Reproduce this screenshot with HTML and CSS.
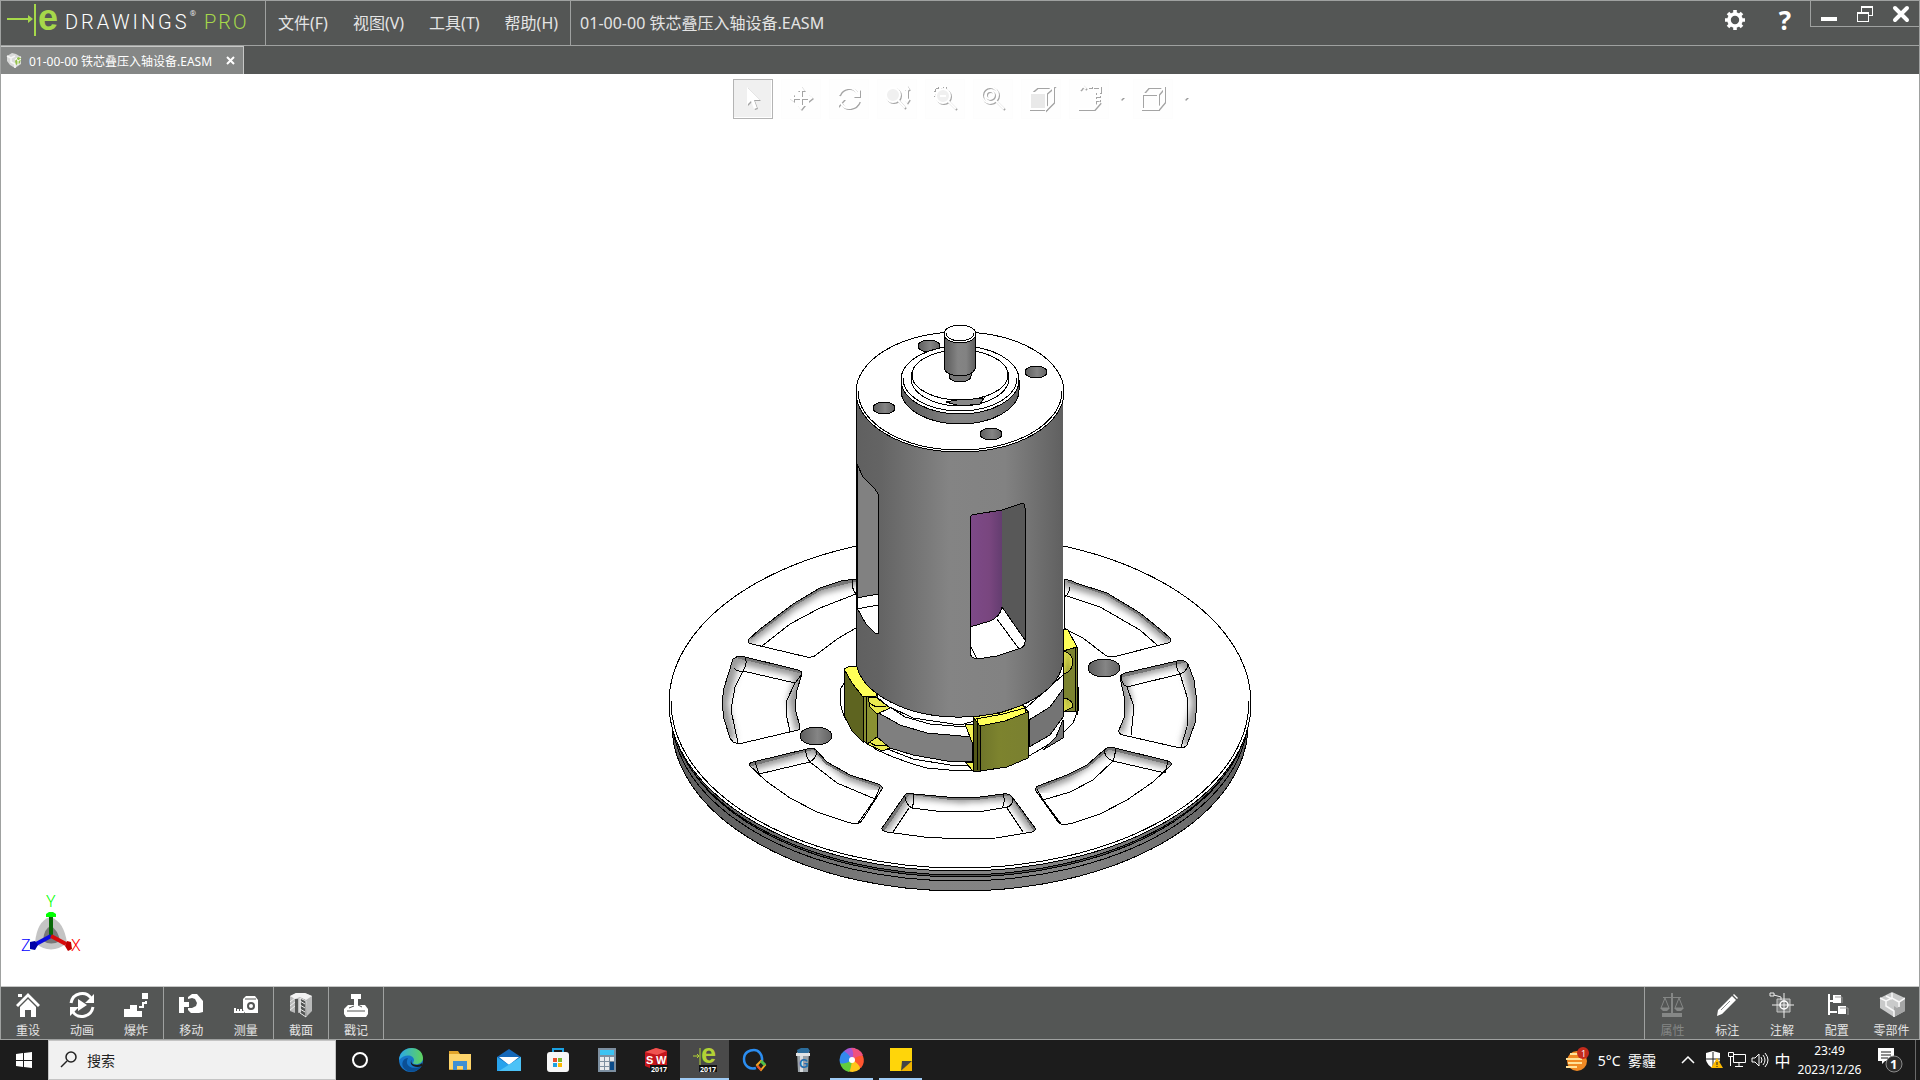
FILE: index.html
```html
<!DOCTYPE html>
<html lang="zh-CN">
<head>
<meta charset="UTF-8">
<meta name="viewport" content="width=device-width, initial-scale=1.0">
<title>eDrawings Pro</title>
<link rel="stylesheet" href="styles.css">
</head>
<body>

<div class="app">
    <header class="header">
        <div class="logo">
            <svg class="logo-mark" width="31" height="34" viewBox="0 0 31 34">
                <path d="M1 15h21v-3l5 4-5 4v-3H1z" fill="#a6d84a"/>
                <path d="M29 1v32" stroke="#a6d84a" stroke-width="2"/>
            </svg>
            <span class="logo-e">e</span>
            <span class="logo-name">DRAWINGS</span>
            <span class="logo-reg">®</span>
            <span class="logo-pro">PRO</span>
        </div>
        <nav class="menu">
            <button type="button">文件(F)</button>
            <button type="button">视图(V)</button>
            <button type="button">工具(T)</button>
            <button type="button">帮助(H)</button>
        </nav>
        <div class="doc-title">01-00-00 铁芯叠压入轴设备.EASM</div>
        <button type="button" class="head-btn" aria-label="选项">
            <svg width="22" height="22" viewBox="-11 -11 22 22">
                <circle r="6" fill="none" stroke="#fff" stroke-width="3.6"/>
                <path d="M0-10v3M0 10V7M-10 0h3M10 0H7M-7-7l2 2M7 7L5 5M7-7L5-5M-7 7l2-2" stroke="#fff" stroke-width="3.6"/>
            </svg>
        </button>
        <button type="button" class="head-btn help" aria-label="帮助">?</button>
        <div class="win-buttons">
            <button type="button" aria-label="最小化"><svg width="18" height="18"><path d="M1 14h16" stroke="#fff" stroke-width="4"/></svg></button>
            <button type="button" aria-label="还原"><svg width="18" height="18" fill="none" stroke="#fff" shape-rendering="crispEdges"><path d="M5.500 7V1.500h11v9H13M1.500 8h11v8.500h-11z"/><path d="M5 2h12M1 8h12" stroke-width="2"/></svg></button>
            <button type="button" aria-label="关闭"><svg width="18" height="18"><path d="M3 3l12 12M15 3L3 15" stroke="#fff" stroke-width="4" stroke-linecap="round"/></svg></button>
        </div>
    </header>

    <div class="tabs">
        <div class="tab">
            <svg width="17" height="17" viewBox="0 0 17 17">
                <path d="M1 4l5-3 4 1 5 3v7l-6 4-5-3-3-4z" fill="#d9dad9"/>
                <path d="M1 4l4 2v4l4 2v4M9 8l6-3M5 6l4-2" fill="none" stroke="#f6f6f6" stroke-width="1.500"/>
                <path d="M9 9l3-4 3 1-1 5-4 2z" fill="#94c14a"/>
                <path d="M10 6l2 3 3-2M12 9v4" fill="none" stroke="#fff"/>
            </svg>
            <span>01-00-00 铁芯叠压入轴设备.EASM</span>
            <button type="button" aria-label="关闭"><svg width="9" height="9"><path d="M1 1l7 7M8 1L1 8" stroke="#fff" stroke-width="2"/></svg></button>
        </div>
    </div>

    <main class="viewport">
        <div class="toolbar">
            <button type="button" class="tool selected" aria-label="选择"><svg viewBox="0 0 24 24"><path d="M6 1v18l4-4 3 8 3-1-3-8h6z" class="solid"/></svg></button>
            <button type="button" class="tool" aria-label="平移"><svg viewBox="0 0 24 24"><path d="M12 4v16M4 12h16" /><path d="M12 0l4 5H8zM12 24l4-5H8zM0 12l5-4v8zM24 12l-5-4v8z" class="solid"/></svg></button>
            <button type="button" class="tool" aria-label="旋转"><svg viewBox="0 0 24 24"><path d="M2 9c3-8 14-10 18-2M22 15c-3 8-14 10-18 2"/><path d="M23 3v8h-7zM1 21v-8h7z" class="solid"/></svg></button>
            <button type="button" class="tool" aria-label="缩放"><svg viewBox="0 0 24 24"><circle cx="8" cy="9" r="7" class="lens"/><path d="M13 14l7 8M22 2v13M20 4l2-3 2 3M20 13l2 3 2-3"/></svg></button>
            <button type="button" class="tool" aria-label="局部放大"><svg viewBox="0 0 24 24"><path d="M1 10V1h12" stroke-dasharray="3 2"/><circle cx="10" cy="10" r="7" class="lens"/><path d="M15 15l8 8M7 10h6"/></svg></button>
            <button type="button" class="tool" aria-label="整屏显示"><svg viewBox="0 0 24 24"><circle cx="9" cy="9" r="8"/><circle cx="9" cy="9" r="4"/><path d="M15 15l8 8"/></svg></button>
            <button type="button" class="tool" aria-label="上色"><svg viewBox="0 0 24 24"><path d="M1 7h16v16H1z" fill="#e9e9e9"/><path d="M1 7l7-6h16l-7 6v16l7-7V1"/></svg></button>
            <button type="button" class="tool" aria-label="视图方向"><svg viewBox="0 0 24 24"><path d="M3 4l3-4 3 3M11 1h4M16 1h7v6M18 6v4h5M18 14h5M1 23h16l6-7M18 11v9"/></svg></button>
            <button type="button" class="tool-arrow" aria-label="更多"><svg viewBox="0 0 8 6"><path d="M2 1h5L4 4z"/></svg></button>
            <button type="button" class="tool" aria-label="显示样式"><svg viewBox="0 0 24 24"><path d="M1 8h16v15H1zM1 8l6-7h16v15l-6 7M17 8l6-7"/></svg></button>
            <button type="button" class="tool-arrow" aria-label="更多"><svg viewBox="0 0 8 6"><path d="M2 1h5L4 4z"/></svg></button>
        </div>

        <svg class="model" viewBox="1 74 1918 912">
            <defs>
                <linearGradient id="steel">
                    <stop offset="0" stop-color="#606060"/><stop offset=".12" stop-color="#646464"/>
                    <stop offset=".45" stop-color="#848484"/><stop offset=".72" stop-color="#828282"/>
                    <stop offset="1" stop-color="#606060"/>
                </linearGradient>
                <linearGradient id="hole">
                    <stop offset="0" stop-color="#5c5c5c"/><stop offset=".55" stop-color="#858585"/><stop offset="1" stop-color="#626262"/>
                </linearGradient>
                <linearGradient id="violet">
                    <stop offset="0" stop-color="#7d4a88"/><stop offset=".6" stop-color="#79467f"/><stop offset="1" stop-color="#643d70"/>
                </linearGradient>
                <linearGradient id="olive">
                    <stop offset="0" stop-color="#6f752a"/><stop offset=".4" stop-color="#7d832e"/><stop offset="1" stop-color="#7a8030"/>
                </linearGradient>
                <radialGradient id="boss">
                    <stop offset="0" stop-color="#8a9130"/><stop offset="1" stop-color="#d8d84c"/>
                </radialGradient>
                <filter id="soft" x="-10%" y="-10%" width="120%" height="120%"><feGaussianBlur stdDeviation="3"/></filter>

                <path id="p1" d="M856 579L841 581 820 588 793 604 759 630 748 640Q748 644 752 644L807 657Q813 658 816 655L837 639 856 628V594z"/>
                <path id="p2" d="M1064 580Q1070 579 1076 583L1107 593 1140 613 1161 630 1170 638Q1172 642 1168 643L1113 657Q1108 657 1105 655L1083 638 1067 630 1064 628z"/>
                <path id="p3" d="M733 659Q738 655 745 657L798 670Q802 671 802 674L797 690 795 708 800 727Q800 730 798 730L743 743Q737 744 733 742L730 738 724 719 722 703 724 688z"/>
                <path id="p4" d="M1120 678Q1120 675 1125 673L1177 661Q1184 659 1188 664L1194 680 1197 703 1195 723 1187 745Q1185 748 1180 748L1123 735Q1118 734 1119 730L1124 718 1125 700z"/>
                <path id="p5" d="M750 766Q748 763 753 762L807 749Q814 747 817 751L827 762 850 775 878 784Q883 786 882 789L863 819Q860 824 855 824L847 822 817 812 790 798 766 781z"/>
                <path id="p6" d="M1171 765Q1173 763 1168 761L1115 748Q1108 746 1104 750L1087 765 1067 775 1038 786Q1035 787 1036 791L1056 819Q1059 824 1064 825L1073 823 1100 814 1127 800 1153 782z"/>
                <path id="p7" d="M905 795Q907 792 914 794L947 797 980 797 1003 794Q1010 793 1013 798L1035 828Q1036 831 1032 832L996 838 960 839 924 837 887 832Q881 831 882 828z"/>
                <clipPath id="c1"><use href="#p1"/></clipPath><clipPath id="c2"><use href="#p2"/></clipPath>
                <clipPath id="c3"><use href="#p3"/></clipPath><clipPath id="c4"><use href="#p4"/></clipPath>
                <clipPath id="c5"><use href="#p5"/></clipPath><clipPath id="c6"><use href="#p6"/></clipPath>
                <clipPath id="c7"><use href="#p7"/></clipPath>
            </defs>

            <!-- flange rim -->
            <g class="edge">
                <ellipse cx="960" cy="725" rx="288" ry="166" fill="url(#steel)"/>
                <ellipse cx="960" cy="716" rx="288" ry="165" fill="url(#steel)"/>
                <ellipse cx="960" cy="711" rx="287" ry="166" fill="#555"/>
                <ellipse cx="960" cy="708" rx="289" ry="167" fill="url(#steel)"/>
                <ellipse cx="960" cy="703" rx="291" ry="168" fill="#fff"/>
                <path d="M671 701A289 167 0 0 0 1249 701" fill="none"/>
            </g>

            <!-- pockets -->
            <g class="shade">
                <g clip-path="url(#c1)"><path d="M745 641L793 604 820 588 860 578" class="blur"/><path d="M750 637L793 604 820 588 856 579" class="wall"/></g>
                <g clip-path="url(#c2)"><path d="M1060 579L1107 593 1140 613 1172 640" class="blur"/><path d="M1068 580L1107 593 1140 613 1170 638" class="wall"/></g>
                <g clip-path="url(#c3)"><path d="M730 740L722 703 735 657 802 672 794 700 801 730" class="blur"/><path d="M738 656L802 671" class="wall"/></g>
                <g clip-path="url(#c4)"><path d="M1118 732L1126 700 1120 675 1187 659 1198 703 1187 745" class="blur"/><path d="M1121 675L1185 660" class="wall"/></g>
                <g clip-path="url(#c5)"><path d="M750 765L814 747 850 775 884 786" class="blur"/><path d="M750 764L814 747 827 762 850 775 884 786" class="wall"/></g>
                <g clip-path="url(#c6)"><path d="M1172 763L1108 747 1067 775 1034 788" class="blur"/><path d="M1172 763L1108 747 1087 765 1067 775 1034 788" class="wall"/></g>
                <g clip-path="url(#c7)"><path d="M882 830L908 792 960 797 1010 794 1036 830" class="blur"/><path d="M882 830L908 792 947 797 980 797 1011 793 1036 830" class="wall"/></g>
            </g>
            <g class="edge" fill="none">
                <use href="#p1"/><use href="#p2"/><use href="#p3"/><use href="#p4"/><use href="#p5"/><use href="#p6"/><use href="#p7"/>
                <path d="M856 594L820 608 790 624 762 646M852 580Q852 590 856 594"/>
                <path d="M1064 595L1100 607 1140 630 1157 645M1070 581Q1071 594 1064 597"/>
                <path d="M734 668Q737 672 743 671L795 683 802 674M743 671Q748 664 745 657M743 671L735 687 731 710 738 743M795 683L787 700 786 713 790 732"/>
                <path d="M1122 676Q1120 683 1127 687L1180 674Q1187 672 1188 664M1180 674Q1175 667 1177 661M1180 674L1188 700 1187 727 1181 747M1127 687L1134 707 1131 735"/>
                <path d="M755 762L759 774 810 762Q818 757 816 750M810 762Q805 756 806 749M810 762L837 783 875 799 880 787M875 799L858 823M750 766L759 774"/>
                <path d="M1168 761L1165 773 1113 761Q1103 757 1105 749M1113 761Q1116 755 1115 748M1113 761L1093 780 1070 792 1043 800 1037 789M1043 800L1061 824"/>
                <path d="M905 797Q906 805 912 808L936 811 984 811 1002 808Q1013 808 1013 798M912 808Q915 800 913 794M1002 808Q1006 802 1003 794M909 808L893 832M1007 808L1023 832"/>
            </g>
            <g class="edge" fill="url(#hole)">
                <ellipse cx="816" cy="736" rx="16" ry="9"/>
                <ellipse cx="1104" cy="668" rx="16" ry="9"/>
            </g>

            <!-- bore and laminated core -->
            <g class="edge">
                <path d="M841 688Q838 704 845 718 856 737 877 750 900 761 927 768L960 771 1000 768 1029 756 1056 740 1073 723Q1081 706 1078 687L1064 660H860z" fill="#fff"/>
                <path d="M1043 750L1056 737 1063 720V738z" fill="#777"/>
                <path d="M877 712L890 707 913 718 960 725 1027 707 1063 675V689L1050 707 1029 720 972 737 927 733 900 725z" fill="#fff"/>
                <path d="M890 707L905 717 930 724 966 727M877 745L913 759 950 765 974 765" fill="none"/>
                <path d="M877 712L900 725 927 733 972 737V762L947 761 913 755 890 748 877 741z" fill="#7f7f7f"/>
                <path d="M1029 720L1050 707 1063 689V717L1050 735 1029 747z" fill="#747474"/>
            </g>

            <!-- left clamp -->
            <g class="edge">
                <path d="M863 697L877 693 878 698 890 708 877 713V737L890 748 882 751 863 741z" fill="#8a9132"/>
                <path d="M868 697L877 698 890 708 877 714 870 707zM867 744L877 737 890 748 882 751z" fill="#eaea50"/>
                <path d="M870 703Q876 709 886 706M870 742Q876 748 886 745" fill="none"/>
                <path d="M844 669L863 697V742L852 731 844 715z" fill="#5e6420"/>
                <path d="M844 669L848 667 857 666 860 673 868 685 877 693 876 696 863 697 852 683z" fill="#ffff58"/>
                <path d="M863 697V742M866 697V744" fill="none"/>
            </g>

            <!-- right clamp -->
            <g class="edge">
                <path d="M1063 629L1068 630 1077 647V711L1063 712z" fill="#7c8330"/>
                <path d="M1063 651Q1073 653 1073 663 1071 673 1063 674zM1063 698Q1073 699 1073 707L1063 712z" fill="url(#boss)"/>
                <path d="M1063 629L1068 630 1077 647 1063 651z" fill="#ffff58"/>
                <path d="M1075 648V712M1077 688Q1081 702 1077 715" fill="none"/>
            </g>

            <!-- sleeve -->
            <path d="M856 391V663A104 60 0 0 0 1063 663V391z" fill="url(#steel)" class="noline"/>
            <path d="M856 391V663A104 60 0 0 0 1063 663" fill="none" class="edge"/>
            <g class="edge">
                <path d="M857 464L863 477 875 489 878 494V633H875L866 624 857 608z" fill="#fff"/>
                <path d="M857 464L863 477 875 489 878 494V594L857 598z" fill="#818181"/>
                <path d="M857 609L878 605" fill="none"/>
            </g>
            <g class="edge">
                <path d="M970 518Q970 514 977 514L1002 510 1020 504Q1025 502 1025 508V642Q1025 646 1021 648L997 656 977 659Q970 658 970 652z" fill="#fff"/>
                <path d="M1002 510L1020 504Q1025 502 1025 508V640L1002 607z" fill="#585858" class="noline"/>
                <path d="M970 518Q970 514 977 514L1002 510V607Q1000 617 990 621L970 627z" fill="url(#violet)" class="noline"/>
                <path d="M970 627L990 621Q1000 617 1002 607L1025 640M997 619L1019 649M971 647L977 659" fill="none"/>
                <path d="M970 652V518Q970 514 977 514L1002 510 1020 504Q1025 502 1025 508V642" fill="none"/>
            </g>

            <!-- front clamp -->
            <g class="edge">
                <path d="M965 724H973V745zM965 762H973V771z" fill="#f0f052"/>
                <path d="M973 717L980 726V771H973z" fill="#535818"/>
                <path d="M980 726L1028 712V758L1007 767 980 771z" fill="url(#olive)"/>
                <path d="M973 717L1000 713 1023 705 1028 712 1005 721 980 726z" fill="#ffff58"/>
                <path d="M977 719V770M976 719L1003 714 1025 708M1025 706V712" fill="none"/>
            </g>

            <!-- top face -->
            <g class="edge">
                <ellipse cx="960" cy="392" rx="104" ry="60" fill="#fff"/>
                <path d="M858 391A102 59 0 0 0 1062 391" fill="none"/>
                <g fill="url(#hole)">
                    <ellipse cx="929" cy="346" rx="11" ry="6"/>
                    <ellipse cx="1036" cy="372" rx="11" ry="6"/>
                    <ellipse cx="884" cy="408" rx="11" ry="6"/>
                    <ellipse cx="991" cy="434" rx="11" ry="6"/>
                </g>
                <path d="M901 380V390A59 34 0 0 0 1019 390V380z" fill="url(#steel)"/>
                <ellipse cx="960" cy="380" rx="59" ry="34" fill="#fff"/>
                <path d="M903 378A57 33 0 0 0 1017 378" fill="none"/>
                <ellipse cx="960" cy="378" rx="49" ry="28" fill="#fff"/>
                <path d="M946 402L962 399 984 398 980 404 960 406z" fill="#888"/>
                <ellipse cx="960" cy="375" rx="48" ry="25" fill="#fff"/>
                <path d="M949 372V376A11 6 0 0 0 971 376V372z" fill="#777"/>
                <path d="M944 334V369Q948 376 960 376T975 369V334z" fill="url(#steel)"/>
                <ellipse cx="960" cy="334" rx="16" ry="9" fill="#fff"/>
                <path d="M946 333A14 8 0 0 0 974 333" fill="none"/>
            </g>
        </svg>

        <svg class="triad" width="64" height="64" viewBox="20 890 64 64">
            <path d="M35 943Q37 921 50 917 64 921 67 943 51 956 35 943z" fill="#c4c4c4"/>
            <path d="M43 941Q44 928 51 926 58 930 60 941 51 946 43 941z" fill="#787878"/>
            <path d="M51 936V916" stroke="#086808" stroke-width="4"/>
            <path d="M51 936L36 944" stroke="#0a0ae0" stroke-width="4"/>
            <path d="M51 936L66 944" stroke="#d80a0a" stroke-width="4"/>
            <path d="M46 914l3-2h4l3 2v3H46z" fill="#00ff00"/>
            <path d="M30 942l5-1 3 4-3 5-5-1z" fill="#0000a8"/>
            <path d="M71 942l-4-1-2 5 3 5 4-2z" fill="#c00000"/>
            <text x="46" y="907" fill="#00ff00">Y</text>
            <text x="21" y="951" fill="#0000ff">Z</text>
            <text x="71" y="951" fill="#ff0000">X</text>
        </svg>
    </main>

    <footer class="commands">
        <div class="group">
            <button type="button"><svg viewBox="0 0 26 26"><path d="M3 5h4V2H3zM13 1L1 13l2 2L13 5l10 10 2-2z" fill="#fff"/><path d="M5 15l8-8 8 8v10h-5v-7h-6v7H5z" fill="#fff"/></svg>重设</button>
            <button type="button"><svg viewBox="0 0 26 26"><path d="M2 11C4 0 17-1 22 6M24 15c-2 11-15 12-20 5" fill="none" stroke="#fff" stroke-width="3"/><path d="M25 2v9h-9zM1 24v-9h9zM9 7l9 6-9 6z" fill="#fff"/></svg>动画</button>
            <button type="button"><svg viewBox="0 0 26 26"><path d="M1 25v-8h6v-4h7v6h5v6zM19 1h6v6h-6z" fill="#fff"/><path d="M16 15h4v-4h3V9" fill="none" stroke="#fff" stroke-width="2"/></svg>爆炸</button>
        </div>
        <div class="group pair">
            <button type="button"><svg viewBox="0 0 26 26"><path d="M1 5h5v5h5v5H6v6H1z" fill="#fff"/><path d="M10 5l4-3h5l6 7v11l-4 1h-8l-3-3v-2h4l4-2 1-3-2-4-3-1-4 1z" fill="#fff"/></svg>移动</button>
            <button type="button"><svg viewBox="0 0 26 26"><path d="M10 7l3-3h9l3 4v13H12l-2-3z" fill="#fff"/><path d="M12 7h11" stroke="#545655"/><circle cx="18" cy="14" r="3" fill="none" stroke="#545655" stroke-width="2"/><path d="M11 20H1M2 20v-4M5 20v-3M8 20v-3" stroke="#fff" stroke-width="2"/></svg>测量</button>
        </div>
        <div class="group single">
            <button type="button"><svg viewBox="0 0 26 26"><path d="M2 4l6-3h9l7 3v15l-5 5-1-16-5-2v14l-3 1V7L7 7v14l-5-2z" fill="#b9baba"/><path d="M2 4l6-3h9l7 3-6 4-6-3-5 2z" fill="#f2f2f2"/><path d="M2 10l5-4M2 14l5-4M2 18l5-4M12 9l5 3M12 13l5 3M12 17l5 3" stroke="#eee"/><path d="M12 6v15l6 4V9z" fill="none" stroke="#eee"/></svg>截面</button>
        </div>
        <div class="group single">
            <button type="button"><svg viewBox="0 0 26 26"><path d="M8 2h10v5h-3v6h7l3 4v5l-2 3H3l-2-3v-5l4-4h6V7H8z" fill="#fff"/><path d="M4 19h18M6 16l5-2M15 13l4 2" stroke="#545655"/></svg>戳记</button>
        </div>
        <div class="group right">
            <button type="button" disabled><svg viewBox="0 0 26 26"><path d="M12 1h2v20h9v4H3v-4h9zM4 5h18v1H4z" fill="#858786"/><path d="M6 6L2 16h8zM20 6l-4 10h8z" fill="none" stroke="#858786"/><path d="M1 16h10l-3 3H4zM15 16h10l-3 3h-4z" fill="#858786"/></svg>属性</button>
            <button type="button"><svg viewBox="0 0 26 26"><path d="M4 18L18 4l4 4L8 22l-5 2zM19 3l1-1 4 4-1 1z" fill="#fff"/><path d="M7 18l9-9" stroke="#8c8e8d"/></svg>标注</button>
            <button type="button"><svg viewBox="0 0 26 26"><path d="M8 7h13v13H8z" fill="#7d7f7e" stroke="#c5c6c5"/><path d="M1 1h4v3H1zM5 3l7 2v3M15 1v25M3 13h22" stroke="#eee" fill="none"/><circle cx="15" cy="13" r="4" fill="none" stroke="#fff" stroke-width="1.500"/></svg>注解</button>
            <button type="button"><svg viewBox="0 0 26 26"><path d="M5 2v21M5 9h5M5 20h8" stroke="#fff" stroke-width="2" fill="none"/><path d="M9 3h8v8H9zM14 14h8v8h-8z" fill="#fff"/><path d="M11 5h7v6M16 16h8v7" fill="none" stroke="#999"/></svg>配置</button>
            <button type="button"><svg viewBox="0 0 26 26"><path d="M1 6l12-6 13 6v13l-11 6L1 16z" fill="#c9caca"/><path d="M15 14v11l11-6V7l-5 3v4l-3 2z" fill="#a4a5a5"/><path d="M1 6l6 3 6-3 7 4 6-4M7 9v5l8 5v6M13 6V1M7 4l6 3M20 10v5" fill="none" stroke="#f8f8f8" stroke-width="1.500"/></svg>零部件</button>
        </div>
    </footer>
</div>

<div class="taskbar">
    <button type="button" class="start" aria-label="开始"><svg width="16" height="16"><path d="M0 2l7-1v7H0zM8 1l8-1v8H8zM0 9h7v6l-7-1zM8 9h8v7l-8-1z" fill="#fff"/></svg></button>
    <label class="search">
        <svg width="18" height="18" viewBox="0 0 18 18"><circle cx="11" cy="6" r="5" fill="none" stroke="#222" stroke-width="1.500"/><path d="M7 10L1 16" stroke="#222" stroke-width="1.500"/></svg>
        <input type="text" placeholder="搜索" aria-label="搜索">
    </label>
    <button type="button" class="task cortana" aria-label="Cortana"><svg viewBox="0 0 24 24"><circle cx="12" cy="12" r="7" fill="none" stroke="#fff" stroke-width="2"/></svg></button>
    <button type="button" class="task" aria-label="Edge"><svg viewBox="0 0 24 24"><defs><linearGradient id="edgeTop"><stop offset="0" stop-color="#2aa8e8"/><stop offset="1" stop-color="#5fd35c"/></linearGradient></defs><circle cx="12" cy="12" r="12" fill="#1675c9"/><path d="M0 12C1-3 23-4 24 10c0 5-5 7-9 6-2-1 0-2 0-4 0-5-9-7-15 0z" fill="url(#edgeTop)"/><path d="M9 10c-4 7 3 13 14 8-5 7-15 8-19 1-2-5 1-9 5-9z" fill="#0b4f95"/><path d="M13 11c-2 3 0 6 5 6 2 0 4-1 5-2v3c-8 3-14-2-10-7z" fill="#1b1b1b"/></svg></button>
    <button type="button" class="task" aria-label="文件资源管理器"><svg viewBox="0 0 24 24"><path d="M1 3h9l2 3h11v16H1z" fill="#e2a52b"/><path d="M1 6h22v15H1z" fill="#fdd46b"/><path d="M5 22v-9h14v9h-4v-4H9v4z" fill="#3f8fd3"/></svg></button>
    <button type="button" class="task" aria-label="邮件"><svg viewBox="0 0 24 24"><path d="M0 9l12-8 12 8v14H0z" fill="#1467b8"/><path d="M2 9h20l-10 8z" fill="#fff"/><path d="M0 9l12 8 12-8v14H0z" fill="#28a3ec"/><path d="M24 9v14H2z" fill="#4cc2f7"/></svg></button>
    <button type="button" class="task" aria-label="应用商店"><svg viewBox="0 0 24 24"><path d="M7 6V1h10v5" fill="none" stroke="#1ba1e2" stroke-width="2"/><rect y="4" x="1" width="22" height="20" rx="3" fill="#f7f7f7"/><path d="M7 10h4v4H7z" fill="#e9502b"/><path d="M12 10h4v4h-4z" fill="#7cb82f"/><path d="M7 15h4v4H7z" fill="#1ba1e2"/><path d="M12 15h4v4h-4z" fill="#fbb800"/></svg></button>
    <button type="button" class="task" aria-label="计算器"><svg viewBox="0 0 24 24"><path d="M3 0h18v24H3z" fill="#7d8fa0"/><path d="M5 2h14v5H5z" fill="#3cc3f2"/><path d="M5 9h4v4H5zM10 9h4v4h-4zM5 14h4v4H5zM10 14h4v4h-4zM5 19h4v3H5zM10 19h4v3h-4zM15 9h4v4h-4z" fill="#e8ebee"/><path d="M15 14h4v8h-4z" fill="#0c4c8a"/></svg></button>
    <button type="button" class="task" aria-label="SolidWorks"><svg viewBox="0 0 24 24"><path d="M1 4l11-4 11 3v15l-10 5L1 18z" fill="#c4161c"/><path d="M1 4l11-4 11 3-10 4z" fill="#ef5350"/><path d="M13 7v16" stroke="#8d0c10"/><text x="2" y="16" class="sw">S</text><text x="12" y="16" class="sw">W</text><path d="M6 17h18v7H6z" fill="#111"/><text x="7" y="24" class="year">2017</text></svg></button>
    <button type="button" class="task active" aria-label="eDrawings"><svg viewBox="0 0 24 24"><path d="M0 8h6M4 6l2 2-2 2M7 0v17" fill="none" stroke="#b2d235"/><text x="8" y="15" class="ee">e</text><path d="M6 17h18v7H6z" fill="#111"/><text x="7" y="24" class="year">2017</text></svg></button>
    <button type="button" class="task" aria-label="Q"><svg viewBox="0 0 24 24"><path d="M14 20C8 22 2 18 2 11S8 2 12 2s9 4 8 11" fill="none" stroke="#2b8df0" stroke-width="2.500"/><path d="M15 17l4-4 4 4-4 5z" fill="none" stroke="#f5a623" stroke-width="2"/><path d="M19 13l4 4" stroke="#4bbf4b" stroke-width="3"/><path d="M15 18l4 4" stroke="#e8502d" stroke-width="2"/></svg></button>
    <button type="button" class="task" aria-label="G"><svg viewBox="0 0 24 24"><path d="M6 4h12l-1 20H7z" fill="#9aa2a8"/><path d="M9 5h3v19H9z" fill="#d9dddf"/><path d="M6 2l4-2h7l2 3-3 3H7z" fill="#2c6d9c"/><path d="M5 5h14v3H5z" fill="#e2e4e5"/><text x="8" y="20" class="gg">G</text></svg></button>
    <button type="button" class="task running" aria-label="浏览器"><svg viewBox="-12 -12 24 24"><path d="M0 0Q-8-2-8-9A12 12 0 0 1 3-12Q7-5 0 0z" fill="#a557d4"/><path d="M0 0Q3-8-1-12A12 12 0 0 1 11-5Q8 1 0 0z" fill="#f0517e"/><path d="M0 0Q7-5 11-4A12 12 0 0 1 9 8Q1 8 0 0z" fill="#ff5630"/><path d="M0 0Q8 4 8 9A12 12 0 0 1-4 11Q-6 5 0 0z" fill="#ffc61a"/><path d="M0 0Q-1 9-3 12A12 12 0 0 1-12 3Q-8-1 0 0z" fill="#62cd3c"/><path d="M0 0Q-8 5-12 3A12 12 0 0 1-8-9Q-2-5 0 0z" fill="#3389ee"/><circle r="3" fill="#fff"/></svg></button>
    <button type="button" class="task running" aria-label="便笺"><svg viewBox="0 0 24 24"><path d="M1 0h22v13l-10 10H1z" fill="#ffd50a"/><path d="M12 23l1-10h10z" fill="#444"/><path d="M23 13v10H12z" fill="#f0b400"/></svg></button>

    <div class="tray">
        <button type="button" class="weather">
            <svg width="26" height="26" viewBox="0 0 26 26"><circle cx="12" cy="14" r="10" fill="#f08a24"/><path d="M5 7h12M1 12h16M3 16h14M1 20h11" stroke="#ffe29a" stroke-width="2"/><circle cx="18" cy="6" r="6" fill="#c42b1c"/><text x="16" y="10" class="badge">1</text></svg>
            <span>5°C&nbsp; 雾霾</span>
        </button>
        <button type="button" class="chevron" aria-label="显示隐藏的图标"><svg width="14" height="8"><path d="M1 7l6-6 6 6" fill="none" stroke="#fff" stroke-width="1.500"/></svg></button>
        <button type="button" class="tray-icon" aria-label="安全"><svg width="18" height="18"><path d="M1 2l7-2 7 2v7q-2 6-7 8-6-3-7-8z" fill="#fff"/><path d="M8 1v16M1 8h14" stroke="#222"/><path d="M12 7l6 10H6z" fill="#fbb800"/><path d="M12 11v3M12 15v1" stroke="#222"/></svg></button>
        <button type="button" class="tray-icon" aria-label="网络"><svg width="18" height="16"><path d="M5.500 2.500h12v8h-12zM11 11v4M7 14.500h8M.5.5h5v4h-5zM2.500 5v9" fill="none" stroke="#fff"/></svg></button>
        <button type="button" class="tray-icon" aria-label="音量"><svg width="18" height="16"><path d="M1 6h3l4-4v12l-4-4H1zM10 5q2 3 0 6M12 3q4 5 0 10M14 1q6 7 0 14" fill="none" stroke="#fff"/></svg></button>
        <button type="button" class="tray-icon ime">中</button>
        <button type="button" class="clock"><span>23:49</span><span>2023/12/26</span></button>
        <button type="button" class="notice" aria-label="通知"><svg width="26" height="26"><path d="M1 1h16v13h-9l-3 3v-3H1z" fill="#fff"/><path d="M4 5h10M4 8h10M4 11h7" stroke="#1c1c1c"/><circle cx="17" cy="17" r="8" fill="#2c2c2c" stroke="#8c8c8c"/><text x="13" y="22" class="count">1</text></svg></button>
        <button type="button" class="show-desktop" aria-label="显示桌面"></button>
    </div>
</div>

</body>
</html>
```
FILE: styles.css
```css
* {
    box-sizing: border-box;
}

body {
    margin: 0;
    height: 100vh;
    display: flex;
    flex-direction: column;
    overflow: hidden;
    font-family: "Noto Sans", "Noto Sans CJK SC", sans-serif;
    color: #e4e4e4;
}

button {
    padding: 0;
    border: none;
    background: none;
    color: inherit;
    font: inherit;
    display: flex;
    align-items: center;
    justify-content: center;
}

svg {
    display: block;
    flex: none;
}

.app {
    flex: 1;
    min-height: 0;
    display: flex;
    flex-direction: column;
    border: 1px solid #9fa1a0;
    border-bottom: none;
    background: #545655;
}

/* header */
.header {
    height: 45px;
    display: flex;
    border-bottom: 1px solid #9fa1a0;
    font-size: 16px;
}

.logo {
    width: 265px;
    display: flex;
    align-items: center;
    padding: 0 0 6px 5px;
    border-right: 1px solid #9fa1a0;
    white-space: nowrap;
}

.logo-e {
    width: 28px;
    padding: 0 0 5px 1px;
    font: bold 36px/36px "Liberation Sans", sans-serif;
    color: #a6d84a;
}

.logo-name,
.logo-pro {
    font: 300 20px/36px Roboto, sans-serif;
    letter-spacing: 3px;
    color: #fff;
    padding-top: 3px;
}

.logo-reg {
    font: 8px/20px Roboto, sans-serif;
    padding-bottom: 12px;
}

.logo-pro {
    color: #a6d84a;
    margin-left: 8px;
    letter-spacing: 2px;
}

.menu {
    display: flex;
    gap: 25px;
    padding: 0 12px 2px 12px;
    border-right: 1px solid #9fa1a0;
}

.doc-title {
    flex: 1;
    display: flex;
    align-items: center;
    padding: 0 0 2px 9px;
}

.head-btn {
    width: 50px;
    height: 38px;
}

.help {
    font: bold 26px/38px "Open Sans", sans-serif;
    color: #fff;
}

.win-buttons {
    height: 26px;
    display: flex;
    border-left: 1px solid #9fa1a0;
    border-bottom: 1px solid #9fa1a0;
}

.win-buttons button {
    width: 36px;
}

.tabs {
    height: 28px;
    display: flex;
}

.tab {
    display: flex;
    align-items: center;
    gap: 6px;
    padding: 0 8px 0 5px;
    background: #858786;
    border-top: 1px solid #c6c7c6;
    border-right: 1px solid #c6c7c6;
    font-size: 12px;
    color: #fff;
}

.tab button {
    margin-left: 8px;
}

/* model view */
.viewport {
    flex: 1;
    min-height: 0;
    position: relative;
    background: #fff;
}

.model {
    width: 100%;
    height: 100%;
    shape-rendering: crispEdges;
}

.edge {
    stroke: #000;
    stroke-width: 1;
}

.noline {
    stroke: none;
}

.shade path {
    fill: none;
}

.shade .blur {
    stroke: #999;
    stroke-width: 12;
    filter: url(#soft);
}

.shade .wall {
    stroke: #777;
    stroke-width: 5;
}

.toolbar {
    position: absolute;
    top: 5px;
    left: 2px;
    right: 0;
    display: flex;
    justify-content: center;
    gap: 8px;
}

.tool {
    width: 40px;
    height: 40px;
    padding-bottom: 2px;
    border: 1px solid #fdfdfd;
    background: #fefefe;
}

.tool svg {
    width: 24px;
    height: 24px;
    overflow: visible;
    fill: none;
    stroke: #fff;
    stroke-width: 2;
    filter: drop-shadow(1px 1px 0 #a4a4a4);
}

.tool .solid {
    fill: #fff;
    stroke: none;
}

.tool .lens {
    fill: #f0f0f0;
}

.tool.selected {
    background: #f0f0f0;
    border-color: #b4b4b4;
    box-shadow: inset -1px -1px #fff;
}

.tool-arrow svg {
    width: 8px;
    height: 6px;
    fill: #fff;
    filter: drop-shadow(1px 1px 0 #999);
}

.triad {
    position: absolute;
    left: 19px;
    bottom: 32px;
    overflow: visible;
    font: 300 16px Roboto, sans-serif;
}

/* command bar */
.commands {
    height: 54px;
    display: flex;
    border-top: 1px solid #c6c7c6;
    border-bottom: 1px solid #9fa1a0;
    font-size: 12px;
}

.group {
    width: 163px;
    display: flex;
    border-right: 1px solid #9fa1a0;
}

.group button {
    flex: 1;
    flex-direction: column;
    justify-content: flex-start;
    padding-top: 5px;
    gap: 4px;
    line-height: 18px;
    white-space: nowrap;
}

.group svg {
    width: 26px;
    height: 26px;
}

.group.pair {
    width: 110px;
}

.group.single {
    width: 55px;
}

.group.right {
    width: 275px;
    margin-left: auto;
    border-right: none;
    border-left: 1px solid #9fa1a0;
}

.group button:disabled {
    color: #858786;
}

/* taskbar */
.taskbar {
    height: 40px;
    display: flex;
    background: #1c1c1c;
    color: #fff;
}

.start {
    width: 48px;
}

.search {
    width: 288px;
    display: flex;
    align-items: center;
    gap: 9px;
    padding-left: 11px;
    background: #f1f1f1;
    border: 1px solid #c4c4c4;
}

.search input {
    flex: 1;
    min-width: 0;
    padding: 0;
    border: none;
    outline: none;
    background: none;
    font: 14px "Noto Sans", "Noto Sans CJK SC", sans-serif;
}

.search input::placeholder {
    color: #222;
}

.task {
    width: 49px;
    border-bottom: 2px solid transparent;
    padding-top: 2px;
}

.task svg {
    width: 24px;
    height: 26px;
    overflow: visible;
}

.task.cortana {
    width: 50px;
    padding-right: 3px;
}

.task.active {
    background: #4a4a4a;
    border-color: #9fcbf5;
}

.task.running {
    border-image: linear-gradient(90deg, transparent 5px, #9fcbf5 5px, #9fcbf5 44px, transparent 44px) 2;
}

.sw {
    font: bold 11px "Liberation Sans", sans-serif;
    fill: #fff;
}

.year {
    font: bold 7px "Open Sans", sans-serif;
    fill: #fff;
}

.ee {
    font: bold 27px "Liberation Sans", sans-serif;
    fill: #b2d235;
}

.gg {
    font: bold 12px "Liberation Sans", sans-serif;
    fill: #1e6fb0;
}

.tray {
    margin-left: auto;
    display: flex;
    font-size: 14px;
}

.weather {
    gap: 7px;
    margin-right: 18px;
    white-space: nowrap;
}

.badge {
    font: 9px "Open Sans", sans-serif;
    fill: #fff;
}

.chevron {
    width: 28px;
}

.tray-icon {
    width: 23px;
}

.ime {
    font-size: 16px;
}

.clock {
    width: 71px;
    flex-direction: column;
    font-size: 12px;
    line-height: 19px;
}

.notice {
    width: 50px;
}

.count {
    font: bold 13px "Open Sans", sans-serif;
    fill: #fff;
}

.show-desktop {
    width: 5px;
    border-left: 1px solid #6a6a6a;
}
```
